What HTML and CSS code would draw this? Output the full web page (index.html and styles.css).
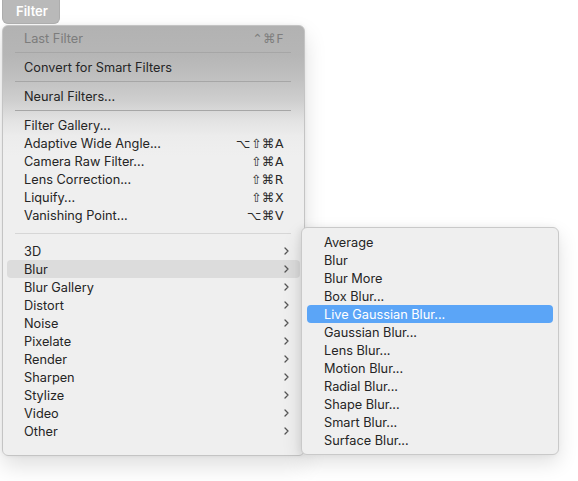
FILE: index.html
```html
<!DOCTYPE html>
<html>
<head>
<meta charset="utf-8">
<link rel="stylesheet" href="styles.css">
</head>
<body>
<div class="stage">
  <div class="menubtn">Filter</div>
  <div class="menu">
    <div class="item disabled"><span class="label">Last Filter</span><span class="key">⌃⌘F</span></div>
    <div class="sep"></div>
    <div class="item"><span class="label">Convert for Smart Filters</span></div>
    <div class="sep"></div>
    <div class="item"><span class="label">Neural Filters...</span></div>
    <div class="sep"></div>
    <div class="item"><span class="label">Filter Gallery...</span></div>
    <div class="item"><span class="label">Adaptive Wide Angle...</span><span class="key">⌥⇧⌘A</span></div>
    <div class="item"><span class="label">Camera Raw Filter...</span><span class="key">⇧⌘A</span></div>
    <div class="item"><span class="label">Lens Correction...</span><span class="key">⇧⌘R</span></div>
    <div class="item"><span class="label">Liquify...</span><span class="key">⇧⌘X</span></div>
    <div class="item"><span class="label">Vanishing Point...</span><span class="key">⌥⌘V</span></div>
    <div class="sep wide"></div>
    <div class="item sub"><span class="label">3D</span><svg class="chev" viewBox="0 0 5 8"><polyline points="1,1 4,4 1,7"/></svg></div>
    <div class="item sub hover"><span class="label">Blur</span><svg class="chev" viewBox="0 0 5 8"><polyline points="1,1 4,4 1,7"/></svg></div>
    <div class="item sub"><span class="label">Blur Gallery</span><svg class="chev" viewBox="0 0 5 8"><polyline points="1,1 4,4 1,7"/></svg></div>
    <div class="item sub"><span class="label">Distort</span><svg class="chev" viewBox="0 0 5 8"><polyline points="1,1 4,4 1,7"/></svg></div>
    <div class="item sub"><span class="label">Noise</span><svg class="chev" viewBox="0 0 5 8"><polyline points="1,1 4,4 1,7"/></svg></div>
    <div class="item sub"><span class="label">Pixelate</span><svg class="chev" viewBox="0 0 5 8"><polyline points="1,1 4,4 1,7"/></svg></div>
    <div class="item sub"><span class="label">Render</span><svg class="chev" viewBox="0 0 5 8"><polyline points="1,1 4,4 1,7"/></svg></div>
    <div class="item sub"><span class="label">Sharpen</span><svg class="chev" viewBox="0 0 5 8"><polyline points="1,1 4,4 1,7"/></svg></div>
    <div class="item sub"><span class="label">Stylize</span><svg class="chev" viewBox="0 0 5 8"><polyline points="1,1 4,4 1,7"/></svg></div>
    <div class="item sub"><span class="label">Video</span><svg class="chev" viewBox="0 0 5 8"><polyline points="1,1 4,4 1,7"/></svg></div>
    <div class="item sub"><span class="label">Other</span><svg class="chev" viewBox="0 0 5 8"><polyline points="1,1 4,4 1,7"/></svg></div>
  </div>
  <div class="submenu">
    <div class="item"><span class="label">Average</span></div>
    <div class="item"><span class="label">Blur</span></div>
    <div class="item"><span class="label">Blur More</span></div>
    <div class="item"><span class="label">Box Blur...</span></div>
    <div class="item selected"><span class="label">Live Gaussian Blur...</span></div>
    <div class="item"><span class="label">Gaussian Blur...</span></div>
    <div class="item"><span class="label">Lens Blur...</span></div>
    <div class="item"><span class="label">Motion Blur...</span></div>
    <div class="item"><span class="label">Radial Blur...</span></div>
    <div class="item"><span class="label">Shape Blur...</span></div>
    <div class="item"><span class="label">Smart Blur...</span></div>
    <div class="item"><span class="label">Surface Blur...</span></div>
  </div>
</div>
</body>
</html>
```
FILE: styles.css
```css
html, body {
  margin: 0;
  padding: 0;
  background: #ffffff;
}
body {
  font-family: Inter, "Liberation Sans", sans-serif;
  font-size: 12.75px;
  color: #252525;
  width: 578px;
  height: 481px;
  overflow: hidden;
}
.stage {
  position: relative;
  padding-left: 2px;
}
.menubtn {
  width: 58px;
  height: 24px;
  box-sizing: border-box;
  background: #b9b9b9;
  border: 1px solid #adadad;
  border-top: none;
  border-radius: 0 0 6px 6px;
  color: #ffffff;
  font-size: 13px;
  font-weight: 600;
  padding-left: 13px;
  line-height: 22px;
  position: relative;
  z-index: 2;
}
.menu {
  width: 303px;
  box-sizing: border-box;
  margin-top: 1px;
  padding: 3px 4px 15px 4px;
  border-radius: 6px;
  border: 1px solid #c4c4c4;
  background: linear-gradient(to bottom, #b2b2b2 0px, #b6b6b6 30px, #bfbfbf 50px, #cfcfcf 75px, #e3e3e3 95px, #ececec 110px, #efefef 130px, #efefef 100%);
  box-shadow: 0 10px 22px rgba(0,0,0,0.13), 0 0 4px rgba(0,0,0,0.06);
}
.item {
  height: 18px;
  display: flex;
  align-items: center;
  padding: 0 11px 0 17px;
  border-radius: 4px;
  white-space: nowrap;
}
.label {
  flex: 1;
}
.disabled {
  color: #7c7c7c;
}
.key {
  font-family: "DejaVu Sans", sans-serif;
  font-size: 12.5px;
  letter-spacing: 0.5px;
  margin-right: 5px;
  color: #2a2a2a;
}
.disabled .key {
  color: #7e7e7e;
}
.sep {
  height: 11px;
  display: flex;
  align-items: center;
  margin: 0 9px 0 8px;
}
.sep::after {
  content: "";
  flex: 1;
  height: 1px;
  background: #a6a6a6;
}
.sep.wide {
  height: 18px;
}
.sep.wide::after {
  background: #d6d6d6;
}
.chev {
  width: 5px;
  height: 8px;
  fill: none;
  stroke: #555555;
  stroke-width: 1.3;
  stroke-linecap: round;
  stroke-linejoin: round;
}
.hover {
  background: #dcdcdc;
}
.submenu {
  position: absolute;
  left: 301px;
  top: 227px;
  width: 258px;
  box-sizing: border-box;
  padding: 5px 5px;
  background: #efefef;
  border: 1px solid #c9c9c9;
  border-radius: 6px;
  box-shadow: 0 8px 20px rgba(0,0,0,0.12), -2px 0 6px rgba(0,0,0,0.06);
  z-index: 3;
}
.submenu .item {
  padding-left: 17px;
}
.selected {
  background: #5ba5f7;
  color: #ffffff;
}
```
